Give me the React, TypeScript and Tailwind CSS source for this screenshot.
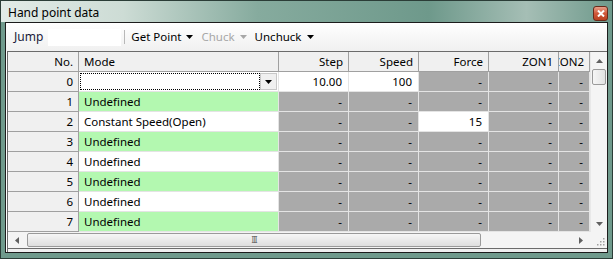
import React from "react";

type Cell = { v: string; bg: "grey" | "white" | "green" };

const cols = [
	{ name: "Step", w: "w-[70px]" },
	{ name: "Speed", w: "w-[70px]" },
	{ name: "Force", w: "w-[70px]" },
	{ name: "ZON1", w: "w-[70px]" },
	{ name: "ZON2", w: "w-[31px]" },
];

const g = (v = "-"): Cell => ({ v, bg: "grey" });
const w = (v: string): Cell => ({ v, bg: "white" });

const rows: { mode: string; modeBg: "white" | "green"; cells: Cell[] }[] = [
	{ mode: "", modeBg: "white", cells: [w("10.00"), w("100"), g(), g(), g()] },
	{ mode: "Undefined", modeBg: "green", cells: [g(), g(), g(), g(), g()] },
	{ mode: "Constant Speed(Open)", modeBg: "white", cells: [g(), g(), w("15"), g(), g()] },
	{ mode: "Undefined", modeBg: "green", cells: [g(), g(), g(), g(), g()] },
	{ mode: "Undefined", modeBg: "white", cells: [g(), g(), g(), g(), g()] },
	{ mode: "Undefined", modeBg: "green", cells: [g(), g(), g(), g(), g()] },
	{ mode: "Undefined", modeBg: "white", cells: [g(), g(), g(), g(), g()] },
	{ mode: "Undefined", modeBg: "green", cells: [g(), g(), g(), g(), g()] },
];

const bgClass = (b: string) => (b === "grey" ? "bg-[#aaaaaa]" : b === "green" ? "bg-[#b3f8b0]" : "bg-white");

const Caret = ({ color = "#000" }: { color?: string }) => (
	<svg width="7" height="4" viewBox="0 0 7 4" className="ml-[5px]">
		<path d="M0 0h7L3.5 4z" fill={color} />
	</svg>
);

const App = () => {
	return (
		<div className="w-[613px] h-[259px] flex flex-col border border-[#2b3d37] bg-[#6f9a8c] font-['Noto_Sans',sans-serif] text-[11.5px] text-black overflow-hidden">
			{/* title bar */}
			<div className="h-[21px] shrink-0 flex items-center justify-between pl-[7px] pr-[4px] pt-[3px] bg-[linear-gradient(90deg,#e2ebe7_0%,#cddcd5_20%,#86ab9e_42%,#6e998b_70%,#a5beb5_86%,#6e998b_100%)]">
				<span className="leading-none text-[12px]">Hand point data</span>
				<div className="w-[15px] h-[15px] rounded-[3px] border border-[#6a2a1a] bg-[linear-gradient(180deg,#e8a08a_0%,#d0583a_50%,#b8401f_100%)] flex items-center justify-center">
					<svg width="8" height="7" viewBox="0 0 8 7">
						<path d="M1 0.5l6 6M7 0.5l-6 6" stroke="#fff" strokeWidth="2" />
					</svg>
				</div>
			</div>

			{/* client */}
			<div className="ml-[4px] mr-[4px] h-[231px] border border-[#1c1c1c] bg-white flex flex-col">
				{/* toolbar */}
				<div className="h-[28px] shrink-0 flex items-center pl-[8px] bg-[linear-gradient(180deg,#ffffff_0%,#f0f0f0_100%)]">
					<span className="text-[#1a1a3a] text-[12px]">Jump</span>
					<div className="ml-[5px] w-[73px] h-[17px] bg-white" />
					<div className="ml-[3px] w-px h-[14px] bg-[#b8b8b8]" />
					<div className="ml-[6px] flex items-center">
						<span>Get Point</span>
						<Caret />
					</div>
					<div className="ml-[8px] flex items-center text-[#a7a7a7]">
						<span>Chuck</span>
						<Caret color="#a7a7a7" />
					</div>
					<div className="ml-[8px] flex items-center">
						<span>Unchuck</span>
						<Caret />
					</div>
				</div>

				{/* grid */}
				<div className="ml-px flex-1 flex flex-col border-l border-t border-[#6b6b6b] bg-[#f0f0f0]">
					<div className="flex h-[180px]">
						<div className="w-[582px] overflow-hidden">
							{/* header */}
							<div className="flex h-[20px] bg-[#f0f0f0]">
								<div className="w-[71px] shrink-0 border-r border-b border-[#a0a0a0] flex items-center justify-end pr-[5px]">No.</div>
								<div className="w-[200px] shrink-0 border-r border-b border-[#a0a0a0] flex items-center pl-[5px]">Mode</div>
								{cols.map((c) => (
									<div key={c.name} className={`${c.w} shrink-0 overflow-hidden whitespace-nowrap border-r border-b border-[#a0a0a0] flex items-center justify-end pr-[5px]`}>
										{c.name}
									</div>
								))}
							</div>
							{rows.map((r, i) => (
								<div key={i} className="flex h-[20px]">
									<div className="w-[71px] shrink-0 bg-[#f0f0f0] border-r border-b border-[#a0a0a0] flex items-center justify-end pr-[5px]">{i}</div>
									<div className={`relative w-[200px] shrink-0 ${bgClass(r.modeBg)} border-r border-b border-[#e4e4e4] flex items-center pl-[5px]`}>
										{i === 0 ? (
											<>
												<div className="absolute left-px top-px bottom-px right-[18px] border border-dotted border-black" />
												<div className="absolute right-px top-px bottom-px w-[17px] bg-[#f0f0f0] border border-[#c8c8c8] flex items-center justify-center">
													<svg width="7" height="4" viewBox="0 0 7 4">
														<path d="M0 0h7L3.5 4z" fill="#000" />
													</svg>
												</div>
											</>
										) : (
											r.mode
										)}
									</div>
									{r.cells.map((c, j) => (
										<div key={j} className={`${cols[j].w} shrink-0 ${bgClass(c.bg)} border-r border-b border-[#e4e4e4] flex items-center justify-end pr-[6px]`}>
											{c.v}
										</div>
									))}
								</div>
							))}
						</div>
						{/* vertical scrollbar */}
						<div className="w-[17px] shrink-0 bg-[#f4f4f4] flex flex-col border-l border-[#e8e8e8]">
							<div className="h-[17px] flex items-center justify-center">
								<svg width="7" height="4" viewBox="0 0 7 4">
									<path d="M3.5 0L7 4H0z" fill="#606060" />
								</svg>
							</div>
							<div className="mx-px h-[16px] rounded-[2px] border border-[#9a9a9a] bg-[linear-gradient(90deg,#f6f6f6,#e2e2e2)]" />
							<div className="flex-1" />
							<div className="h-[17px] flex items-center justify-center">
								<svg width="7" height="4" viewBox="0 0 7 4">
									<path d="M0 0h7L3.5 4z" fill="#606060" />
								</svg>
							</div>
						</div>
					</div>
					{/* horizontal scrollbar */}
					<div className="h-[17px] flex bg-[#f4f4f4] border-b border-[#6b6b6b]">
						<div className="w-[17px] flex items-center justify-center">
							<svg width="4" height="7" viewBox="0 0 4 7">
								<path d="M4 0v7L0 3.5z" fill="#606060" />
							</svg>
						</div>
						<div className="my-px ml-[2px] w-[454px] rounded-[2px] border border-[#9a9a9a] bg-[linear-gradient(180deg,#f6f6f6,#dedede)] flex items-center justify-center">
							<span className="text-[8px] leading-none text-[#666] tracking-[-1px]">III</span>
						</div>
						<div className="flex-1 flex items-center justify-end pr-[7px]">
							<svg width="4" height="7" viewBox="0 0 4 7">
								<path d="M0 0v7L4 3.5z" fill="#606060" />
							</svg>
						</div>
						<div className="w-[17px] flex items-end justify-end p-[2px]">
							<svg width="8" height="8" viewBox="0 0 8 8">
								<g fill="#a0a0a0">
									<rect x="6" y="0" width="1.5" height="1.5" />
									<rect x="3" y="3" width="1.5" height="1.5" />
									<rect x="6" y="3" width="1.5" height="1.5" />
									<rect x="0" y="6" width="1.5" height="1.5" />
									<rect x="3" y="6" width="1.5" height="1.5" />
									<rect x="6" y="6" width="1.5" height="1.5" />
								</g>
							</svg>
						</div>
					</div>
				</div>
			</div>
		</div>
	);
};

export default App;
